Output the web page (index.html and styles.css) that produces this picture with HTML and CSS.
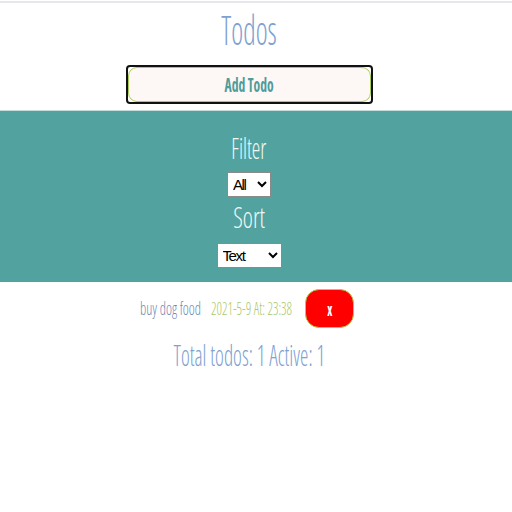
FILE: index.html
```html
<!DOCTYPE html>
<html>
<head>
<meta charset="utf-8">
<link rel="stylesheet" href="styles.css">
</head>
<body>
<div class="topline"></div>
<header class="head">
  <h1 class="title"><span class="sq sq-title">Todos</span></h1>
  <div class="add-wrap"><button class="add-btn"><span class="sq sq-add">Add Todo</span></button></div>
</header>
<section class="controls">
  <div class="label label-filter"><span class="sq sq-filter">Filter</span></div>
  <select class="sel sel-filter"><option>All</option></select>
  <div class="label label-sort"><span class="sq sq-sort">Sort</span></div>
  <select class="sel sel-sort"><option>Text</option></select>
</section>
<main class="list">
  <div class="row">
    <span class="cell cell-text"><span class="sql sq-text">buy dog food</span></span>
    <span class="cell cell-date"><span class="sql sq-date">2021-5-9 At: 23:38</span></span>
    <button class="del"><span class="sq sq-x">x</span></button>
  </div>
  <div class="total"><span class="sq sq-total">Total todos: 1 Active: 1</span></div>
</main>
</body>
</html>
```
FILE: styles.css
```css
html, body { margin: 0; padding: 0; background: #fff; }
body { font-family: "Open Sans", "Liberation Sans", sans-serif; }
.topline { margin-top: 1px; height: 2px; background: #e6e6ec; }
.sq { display: inline-block; transform-origin: 50% 50%; white-space: nowrap; }
.sql { display: inline-block; transform-origin: 0 50%; white-space: nowrap; }
.head, .controls, .list { padding-right: 14px; }
.head { height: 107px; display: flex; flex-direction: column; align-items: center; }
.title {
  margin: 3px 0 0; font-size: 40px; font-weight: 300; font-stretch: 75%;
  line-height: 48px; color: #7ea1d1;
}
.sq-title { transform: scaleX(0.71); }
.add-wrap {
  margin-top: 11px; width: 243px; height: 35px; border: 2px solid #111;
  border-radius: 4px; display: flex; overflow: hidden;
}
.add-btn {
  flex: 1; margin: 0; border: 1px solid #a6cc55; border-radius: 9px;
  background: #fdf8f6; color: #4f9c9a; font-family: "Open Sans", sans-serif;
  font-weight: 700; font-stretch: 75%; font-size: 20px; padding: 0; line-height: 33px;
}
.sq-add { transform: scaleX(0.68); }
.controls {
  height: 171px; background: #52a2a0; border-top: 1px solid #c6dcdb;
  display: flex; flex-direction: column; align-items: center;
}
.label {
  color: #eef8f5; font-size: 29px; font-weight: 350; font-stretch: 75%;
  line-height: 34px;
}
.sq-filter { transform: scaleX(0.74); }
.sq-sort { transform: scaleX(0.83); }
.label-filter { margin-top: 20px; }
.label-sort { margin-top: 3px; }
.sel {
  font-family: "Liberation Sans", sans-serif; font-size: 15px; letter-spacing: -1.4px;
  background: #fff; color: #000; border: 1px solid #8a8a8a; border-radius: 0;
  height: 25px; padding: 0 1px;
}
.sel-filter { width: 44px; margin-top: 7px; }
.sel-sort { width: 65px; margin-top: 9px; }
.list { display: flex; flex-direction: column; align-items: center; }
.row { display: flex; align-items: flex-start; margin: 7px 4px 0 0; height: 39px; }
.cell { display: block; margin-top: 6px; line-height: 26px; font-size: 19px; font-weight: 350; font-stretch: 75%; }
.cell-text { width: 61px; color: #7288b5; }
.cell-date { width: 81px; margin-left: 10px; color: #a9c96b; }
.sq-text { transform: scaleX(0.75); }
.sq-date { transform: scaleX(0.71); }
.del {
  width: 49px; height: 39px; margin-left: 13px; padding: 0; background: #ff0000; color: #fff;
  border: 1px solid #b5c94a; border-radius: 14px; font-weight: 700;
  font-family: "Open Sans", sans-serif; font-stretch: 75%; font-size: 18px; line-height: 30px;
}
.sq-x { transform: scaleX(0.65); }
.total {
  margin-top: 9px; color: #7ea1d1; font-size: 30px; font-weight: 300;
  font-stretch: 75%; line-height: 36px;
}
.sq-total { transform: scaleX(0.70); }
```
